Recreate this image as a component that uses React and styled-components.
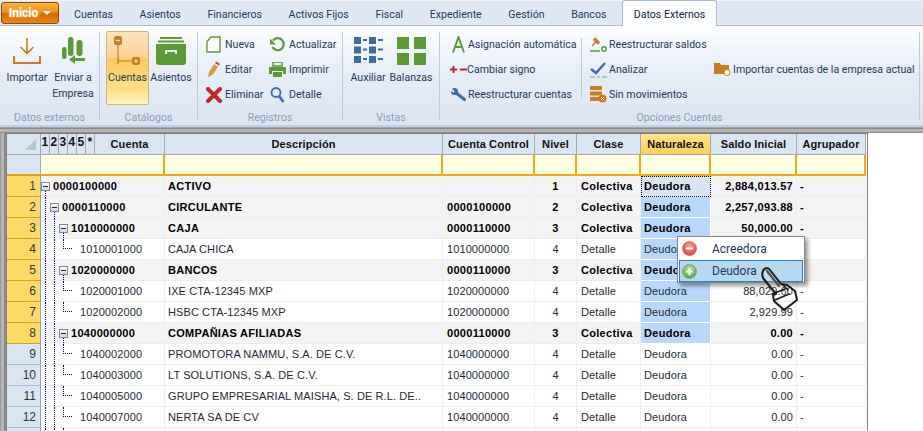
import React from 'react';
import styled, { createGlobalStyle, css } from 'styled-components';

const GlobalStyle = createGlobalStyle`
    html, body { margin: 0; padding: 0; background: #fff; }
    body { font-family: Roboto, "Noto Sans", sans-serif; width: 923px; height: 431px; overflow: hidden; }
`;

const Page = styled.div`
    width: 923px;
    height: 431px;
    overflow: hidden;
    position: relative;
`;

const TabBar = styled.div`
    display: flex;
    align-items: flex-end;
    height: 26px;
    background: #dfe8f4;
    border-top: 1px solid #f2f5fa;
    box-sizing: border-box;
    border-bottom: 1px solid #a9bcd4;
`;

const StartButton = styled.div`
    display: flex;
    align-items: center;
    justify-content: center;
    gap: 5px;
    width: 58px;
    height: 22px;
    margin: 0 1.7px 1px 1px;
    box-sizing: border-box;
    border: 1px solid #8a4a10;
    border-radius: 3px;
    background: linear-gradient(#f9b53c 0%, #ee8f1c 45%, #dd6a04 55%, #e8890f 100%);
    color: #fff;
    font-size: 12px;
    font-weight: 700;
    text-shadow: 0 0 3px #ffd58a;
    &::after {
        content: '';
        border: 4px solid transparent;
        border-top: 4px solid #fff;
        border-bottom: 0;
    }
`;

const Tab = styled.div`
    height: 24px;
    line-height: 27px;
    padding: 0 13.3px;
    font-size: 10.6px;
    color: #1e395b;
    white-space: nowrap;
    ${props => props.active && css`
        background: linear-gradient(#fff, #fbfcfe);
        border: 1px solid #a9bcd4;
        border-bottom: 0;
        border-radius: 3px 3px 0 0;
        padding: 0 11px;
        margin: 0 0 -1px 2px;
        height: 25px;
        color: #10243f;
    `}
`;

const Ribbon = styled.div`
    display: flex;
    height: 99px;
    padding: 6px 3px 0 0;
    box-sizing: border-box;
    background: linear-gradient(#fdfeff 0%, #e7eef7 45%, #dbe5f2 100%);
`;

const Group = styled.div`
    width: ${props => props.width}px;
    flex: ${props => (props.width ? 'none' : 1)};
    height: 88px;
    box-sizing: border-box;
    border-right: 1px solid #bccadc;
    display: flex;
    flex-direction: column;
`;

const GroupBody = styled.div`
    height: 78px;
    flex: none;
    display: flex;
    padding-left: ${props => props.pad || 0}px;
    gap: ${props => props.gap || 0}px;
`;

const GroupLabel = styled.div`
    height: 10px;
    text-align: center;
    font-size: 10.6px;
    line-height: 15px;
    color: #8e9db2;
    white-space: nowrap;
`;

const BigButton = styled.div`
    width: ${props => props.width}px;
    height: 74px;
    margin-top: -1px;
    flex: none;
    box-sizing: border-box;
    display: flex;
    flex-direction: column;
    align-items: center;
    padding-top: 1px;
    font-size: 10.6px;
    line-height: 16px;
    color: #1e395b;
    text-align: center;
    white-space: nowrap;
    border: 1px solid transparent;
    ${props => props.active && css`
        border-color: #d6b46a;
        border-radius: 2px;
        background: linear-gradient(#fee3bd 0%, #fdd29a 34%, #fdc860 38%, #fde08a 80%, #fff6c4 100%);
    `}
`;

const BigIcon = styled.div`
    height: 35px;
    margin-bottom: 2px;
    display: flex;
    align-items: center;
    justify-content: center;
`;

const SmallColumn = styled.div`
    display: flex;
    flex-direction: column;
    width: ${props => props.width}px;
    flex: none;
    padding-left: ${props => props.left || 0}px;
    box-sizing: border-box;
    ${props => props.divided && css`
        position: relative;
        &::after {
            content: '';
            position: absolute;
            right: 0;
            top: 6px;
            height: 60px;
            border-right: 1px solid #bccadc;
        }
    `}
`;

const SmallButton = styled.div`
    height: 25px;
    flex: none;
    display: flex;
    align-items: center;
    gap: ${props => props.gap ?? 3}px;
    font-size: 10.6px;
    color: #1e395b;
    white-space: nowrap;
`;

const SmallIcon = styled.span`
    width: 17px;
    height: 17px;
    flex: none;
    display: flex;
    align-items: center;
    justify-content: center;
`;

const GridArea = styled.div`
    height: 306px;
    box-sizing: border-box;
    padding: 6px 0 0 6px;
    position: relative;
    border-top: 2px solid #c4cfdf;
    background: #fff;
    &::before {
        content: '';
        position: absolute;
        left: 0; right: 0; top: 0;
        height: 6px;
        background: linear-gradient(#9aa6b8 0 1px, #8b8b8b 1px 2px, #b4b4b4 2px 5px, #8b8b8b 5px);
    }
    &::after {
        content: '';
        position: absolute;
        left: 0; top: 6px; bottom: 0;
        width: 6px;
        background: linear-gradient(90deg, #9a9a9a 0 1px, #b4b4b4 1px 4px, #8b8b8b 4px);
    }
`;

const Grid = styled.div`
    width: 862px;
    border-left: 1px solid #808080;
    border-right: 1px solid #808080;
    border-top: 1px solid #808080;
    box-sizing: border-box;
    font-family: "Liberation Sans", Arial, sans-serif;
    font-size: 11px;
    height: 300px;
    overflow: hidden;
`;

const columns = '34px 124px 278px 92px 42px 64px 70px 86px 69px';

const Row = styled.div`
    display: grid;
    grid-template-columns: ${columns};
    height: ${props => props.height || 21}px;
`;

const HeaderCell = styled.div`
    display: flex;
    align-items: center;
    justify-content: center;
    box-sizing: border-box;
    border-right: 1px solid #a5a9af;
    border-bottom: 1px solid #a5a9af;
    background: ${props => (props.hot ? 'linear-gradient(#ffe48a, #ffd055)' : '#d9e5f3')};
    font-weight: 700;
    letter-spacing: .1px;
    color: #111;
    white-space: nowrap;
`;

const Corner = styled(HeaderCell)`
    justify-content: flex-end;
    align-items: flex-end;
    padding: 0 4px 4px 0;
    &::after {
        content: '';
        border-left: 11px solid transparent;
        border-bottom: 11px solid #b3c3d8;
    }
`;

const LevelButtons = styled(HeaderCell)`
    justify-content: flex-start;
`;

const LevelButton = styled.span`
    width: 9px;
    height: 100%;
    flex: none;
    display: flex;
    align-items: flex-start;
    justify-content: center;
    padding-top: 1px;
    box-sizing: border-box;
    font-size: 12px;
    border-right: 1px solid #a5a9af;
`;

const AccountTitle = styled.span`
    flex: 1;
    text-align: center;
`;

const FilterCell = styled.div`
    background: #ffffe1;
    box-sizing: border-box;
    border-right: 2px solid #f7a60f;
    border-bottom: 2px solid #f7a60f;
    ${props => props.first && css`
        background: #d9e5f3;
        border-right: 1px solid #a5a9af;
        border-bottom: 2px solid #d9a200;
    `}
`;

const RowHead = styled.div`
    display: flex;
    align-items: center;
    justify-content: flex-end;
    padding-right: 4px;
    box-sizing: border-box;
    font-size: 12px;
    color: #333;
    border-right: 1px solid #8ea4c0;
    border-bottom: 1px solid ${props => (props.selected ? '#d4a017' : '#a9bdd6')};
    background: ${props => (props.selected ? '#ffd966' : '#d9e5f3')};
`;

const Cell = styled.div`
    display: flex;
    align-items: center;
    justify-content: ${props => (props.right ? 'flex-end' : props.center ? 'center' : 'flex-start')};
    padding: 0 3px 0 ${props => props.inset || 3}px;
    box-sizing: border-box;
    overflow: hidden;
    white-space: nowrap;
    color: ${props => (props.bold ? '#000' : '#232b36')};
    font-weight: ${props => (props.bold ? 700 : 400)};
    letter-spacing: ${props => (props.bold ? '.3px' : '.1px')};
    background: ${props => (props.bold ? '#f3f3f3' : '#fff')};
    border-right: 1px solid #eeeeee;
    border-bottom: 1px solid #ececec;
    ${props => props.picked && css`
        background: #b7d8fc;
        border-right: 1px solid #fff;
        border-bottom: 1px solid #fff;
    `}
    ${props => props.focused && css`
        background: #d9e4f1;
        outline: 1px dotted #000;
        outline-offset: -1px;
    `}
`;

const TreeCell = styled(Cell)`
    padding: 0 0 0 4px;
    overflow: visible;
    position: relative;
`;

const Guide = styled.span`
    width: 9px;
    height: 100%;
    flex: none;
    box-sizing: border-box;
    border-left: 1px dotted #00008b;
`;

const Elbow = styled.span`
    width: 9px;
    height: 50%;
    align-self: flex-start;
    flex: none;
    box-sizing: border-box;
    border-left: 1px dotted #00008b;
    border-bottom: 1px dotted #00008b;
    margin-right: 8px;
`;

const Expander = styled.span`
    position: relative;
    width: 9px;
    height: 9px;
    flex: none;
    box-sizing: border-box;
    margin: 0 3px 0 -4px;
    border: 1px solid #7f8a99;
    background: linear-gradient(#f7f9fc, #cfd8e4);
    &::before {
        content: '';
        position: absolute;
        left: 1px; right: 1px; top: 3px;
        height: 1px;
        background: #1c2a3a;
    }
    ${props => props.hasStem && css`
        &::after {
            content: '';
            position: absolute;
            left: 3px;
            top: 8px;
            height: 7px;
            border-left: 1px dotted #00008b;
        }
    `}
`;

const Menu = styled.div`
    position: absolute;
    left: 677px;
    top: 236px;
    width: 128px;
    height: 47px;
    box-sizing: border-box;
    padding: 1px;
    border: 1px solid #868686;
    background: #fff;
    box-shadow: 3px 3px 4px rgba(0, 0, 0, .4);
    font-family: Roboto, "Liberation Sans", sans-serif;
    font-size: 12px;
    color: #1e395b;
`;

const MenuItem = styled.div`
    height: ${props => (props.active ? 22 : 21)}px;
    display: flex;
    align-items: center;
    box-sizing: border-box;
    padding-left: 3px;
    gap: 15px;
    ${props => props.active && css`
        border: 1px solid #2a7fd0;
        background: #b7d8f0;
        margin-top: 1px;
        padding-left: 2px;
    `}
`;

const Pointer = styled.div`
    position: absolute;
    left: 761px;
    top: 266px;
    width: 40px;
    height: 48px;
`;

const Data = {
    green: '#5b9a35',
    orange: '#c97d22',
    navy: '#3d6aa3',
};

const ImportIcon = () => (
    <svg width="30" height="28" viewBox="0 0 30 28" fill="none" stroke={Data.orange}>
        <path d="M15 1v15M8.500 10l6.500 6.500 6.500-6.500" strokeWidth="1.600" />
        <path d="M2 19v7h26v-7" strokeWidth="2" />
    </svg>
);

const SendIcon = () => (
    <svg width="25" height="28" viewBox="0 0 25 28" fill={Data.green}>
        <rect x="1" y="10" width="4.500" height="12" rx="2.200" />
        <rect x="7" y="0" width="5.500" height="19" rx="2.700" />
        <rect x="15.500" y="3" width="6" height="16" rx="3" />
        <path d="M8 22.500l6-4.500v3h10v3H14v3z" />
    </svg>
);

const TreeIcon = () => (
    <svg width="30" height="32" viewBox="0 0 30 32" fill="none">
        <path d="M5 10v19M5 26h17" stroke={Data.orange} strokeWidth="1.200" />
        <rect x="1" y="1" width="8" height="9" rx="2" fill={Data.orange} />
        <path d="M3 5.500h4" stroke="#fde1b8" strokeWidth="1.400" />
        <rect x="19" y="22" width="8" height="8" rx="2" fill={Data.orange} />
        <path d="M21 26h4M23 24v4" stroke="#fde1b8" strokeWidth="1.200" />
    </svg>
);

const DrawerIcon = () => (
    <svg width="32" height="28" viewBox="0 0 32 28" fill={Data.green}>
        <rect x="5" y="0" width="22" height="2" />
        <rect x="3" y="3.500" width="26" height="2" />
        <path d="M1 7h30v18a3 3 0 0 1-3 3H4a3 3 0 0 1-3-3z" />
        <path d="M11 17v-3h10v3" stroke="#e7eef7" strokeWidth="2" fill="none" />
    </svg>
);

const PageIcon = () => (
    <svg width="15" height="17" viewBox="0 0 15 17" fill="#fff" stroke={Data.green} strokeWidth="1.400">
        <path d="M5 1h9v15H1V5.500z" />
    </svg>
);

const RefreshIcon = () => (
    <svg width="17" height="17" viewBox="0 0 17 17" fill="none" stroke={Data.green} strokeWidth="2.200">
        <path d="M4 4.500a6 6 0 1 1-.6 6.500" />
        <path d="M1 2.500v6h6z" fill={Data.green} stroke="none" />
    </svg>
);

const PencilIcon = () => (
    <svg width="14" height="17" viewBox="0 0 14 17">
        <path d="M1 16l1-5 5-8 4 2.500-5 8z" fill="#d99a3d" />
        <path d="M8 2l1-1.500 4 2.500-1 1.500z" fill="#c0392b" />
    </svg>
);

const PrinterIcon = () => (
    <svg width="17" height="16" viewBox="0 0 17 16" fill={Data.green}>
        <path d="M4 0h9v4H4z" fill="none" stroke={Data.green} strokeWidth="1.500" />
        <path d="M1 5h15a1 1 0 0 1 1 1v6h-3V9H3v3H0V6a1 1 0 0 1 1-1z" />
        <rect x="4" y="10" width="9" height="5" />
    </svg>
);

const CrossIcon = () => (
    <svg width="16" height="16" viewBox="0 0 16 16" stroke="#c1272d" strokeWidth="4" strokeLinecap="round">
        <path d="M2 2l12 12M14 2L2 14" />
    </svg>
);

const SearchIcon = () => (
    <svg width="15" height="17" viewBox="0 0 15 17" fill="none" stroke={Data.navy}>
        <circle cx="6" cy="6.500" r="4.500" strokeWidth="1.800" />
        <path d="M9 10l4.500 6" strokeWidth="2.600" />
    </svg>
);

const AuxiliarIcon = () => (
    <svg width="29" height="27" viewBox="0 0 29 27" fill={Data.navy}>
        {[0, 9.500, 19].map(y => (
            <g key={y}>
                <rect x="0" y={y} width="7" height="7" />
                <rect x="9" y={y + 2} width="4" height="2" />
                <rect x="15" y={y} width="7" height="7" />
                <rect x="24" y={y + 2} width="5" height="2" />
            </g>
        ))}
    </svg>
);

const BalanzasIcon = () => (
    <svg width="29" height="28" viewBox="0 0 29 28" fill={Data.green}>
        <rect x="0" y="0" width="12" height="12" />
        <rect x="17" y="0" width="12" height="12" />
        <rect x="0" y="16" width="12" height="12" />
        <rect x="17" y="16" width="12" height="12" />
    </svg>
);

const LetterIcon = () => (
    <svg width="13" height="17" viewBox="0 0 13 17" fill="none" stroke={Data.green} strokeWidth="1.900">
        <path d="M1 16.500L6.500 1 12 16.500M3 11h7" />
    </svg>
);

const SignIcon = () => (
    <svg width="17" height="7" viewBox="0 0 17 7" fill="#c1272d">
        <rect x="0" y="2.500" width="7" height="2" />
        <rect x="2.500" y="0" width="2" height="7" />
        <rect x="10" y="2.500" width="7" height="2" />
    </svg>
);

const WrenchIcon = () => (
    <svg width="17" height="16" viewBox="0 0 17 16" fill="none" stroke={Data.navy}>
        <circle cx="4.500" cy="4.500" r="3.500" fill={Data.navy} stroke="none" />
        <path d="M5 5l9.500 7.500" strokeWidth="3" strokeLinecap="round" />
        <path d="M0 1.500l4 3.500" stroke="#e7eef7" strokeWidth="2.200" />
    </svg>
);

const GavelIcon = () => (
    <svg width="17" height="15" viewBox="0 0 17 15" fill="none">
        <path d="M2 9l5-5" stroke={Data.orange} strokeWidth="1.500" />
        <path d="M4 1.500l5 5" stroke={Data.orange} strokeWidth="3.400" />
        <path d="M0 14h10" stroke={Data.green} strokeWidth="1.500" />
        <circle cx="14" cy="12" r="2.300" stroke={Data.green} strokeWidth="1.500" />
    </svg>
);

const CheckIcon = () => (
    <svg width="17" height="16" viewBox="0 0 17 16" fill="none" stroke={Data.navy}>
        <path d="M1 7l5 4 9-10" strokeWidth="2.400" />
        <path d="M0 15h5M7 15h3M12 15h5" strokeWidth="1" stroke="#7d97b8" />
    </svg>
);

const NoMovesIcon = () => (
    <svg width="17" height="17" viewBox="0 0 17 17">
        <rect x="0" y="0" width="12" height="4" fill={Data.orange} />
        <rect x="0" y="5.500" width="12" height="4" fill={Data.orange} />
        <rect x="0" y="11" width="9" height="4" fill={Data.orange} />
        <circle cx="12.500" cy="12.500" r="4" fill="#e2711d" />
        <path d="M11 11l3 3M14 11l-3 3" stroke="#fff" />
    </svg>
);

const FolderIcon = () => (
    <svg width="17" height="15" viewBox="0 0 17 15">
        <path d="M0 1h6l1 2h8v9H0z" fill={Data.orange} />
        <circle cx="13" cy="10.500" r="3" fill="#fff" stroke={Data.orange} />
    </svg>
);

const RoundIcon = ({ from, to, plus }) => (
    <svg width="15" height="15" viewBox="0 0 15 15">
        <defs>
            <radialGradient id={plus ? 'gPlus' : 'gMinus'} cx="50%" cy="35%" r="65%">
                <stop offset="0%" stopColor={from} />
                <stop offset="100%" stopColor={to} />
            </radialGradient>
        </defs>
        <circle cx="7.500" cy="7.500" r="7" fill={`url(#${plus ? 'gPlus' : 'gMinus'})`} stroke={to} strokeWidth=".6" />
        <path d={plus ? 'M4 7.500h7M7.500 4v7' : 'M4 7.500h7'} stroke="#fff" strokeWidth="2" />
    </svg>
);

const HandCursor = () => (
    <svg width="40" height="48" viewBox="0 0 40 48" fill="none" stroke="#1a1a1a" strokeWidth="2" strokeLinejoin="round" strokeLinecap="round">
        <path d="M2 5C3 2 7 1 9 4l11 14 6 1 8 6 2 9-13 10-10-9-1-6 3-1-13-16C1 9 1 7 2 5z" fill="rgba(255,255,255,.12)" />
        <path d="M6 5l12 15" stroke="#555" strokeWidth="2.500" />
        <path d="M11 28l13-5M14 34l14-6M22 19l5 5" strokeWidth="1.600" />
    </svg>
);

// guides: lineas abiertas a la izquierda, node: con expansor
const rows = [
    { n: 1, guides: 0, node: true, stem: true, cuenta: '0000100000', desc: 'ACTIVO', control: '', nivel: 1, clase: 'Colectiva', saldo: '2,884,013.57', bold: true, sel: true, focused: true },
    { n: 2, guides: 1, node: true, stem: true, cuenta: '0000110000', desc: 'CIRCULANTE', control: '0000100000', nivel: 2, clase: 'Colectiva', saldo: '2,257,093.88', bold: true, sel: true },
    { n: 3, guides: 2, node: true, stem: true, cuenta: '1010000000', desc: 'CAJA', control: '0000110000', nivel: 3, clase: 'Colectiva', saldo: '50,000.00', bold: true, sel: true },
    { n: 4, guides: 2, cuenta: '1010001000', desc: 'CAJA CHICA', control: '1010000000', nivel: 4, clase: 'Detalle', saldo: '', sel: true },
    { n: 5, guides: 2, node: true, stem: true, cuenta: '1020000000', desc: 'BANCOS', control: '0000110000', nivel: 3, clase: 'Colectiva', saldo: '', bold: true, sel: true },
    { n: 6, guides: 2, cuenta: '1020001000', desc: 'IXE CTA-12345 MXP', control: '1020000000', nivel: 4, clase: 'Detalle', saldo: '88,029.60', sel: true },
    { n: 7, guides: 2, cuenta: '1020002000', desc: 'HSBC CTA-12345 MXP', control: '1020000000', nivel: 4, clase: 'Detalle', saldo: '2,929.99', sel: true },
    { n: 8, guides: 2, node: true, stem: true, cuenta: '1040000000', desc: 'COMPAÑIAS AFILIADAS', control: '0000110000', nivel: 3, clase: 'Colectiva', saldo: '0.00', bold: true, sel: true },
    { n: 9, guides: 2, cuenta: '1040002000', desc: 'PROMOTORA NAMMU, S.A. DE C.V.', control: '1040000000', nivel: 4, clase: 'Detalle', saldo: '0.00' },
    { n: 10, guides: 2, cuenta: '1040003000', desc: 'LT SOLUTIONS, S.A. DE C.V.', control: '1040000000', nivel: 4, clase: 'Detalle', saldo: '0.00' },
    { n: 11, guides: 2, cuenta: '1040005000', desc: 'GRUPO EMPRESARIAL MAISHA, S. DE R.L. DE..', control: '1040000000', nivel: 4, clase: 'Detalle', saldo: '0.00' },
    { n: 12, guides: 2, cuenta: '1040007000', desc: 'NERTA SA DE CV', control: '1040000000', nivel: 4, clase: 'Detalle', saldo: '0.00' },
    { n: 13, guides: 2, cuenta: '', desc: '', control: '', nivel: '', clase: '', saldo: '', blank: true },
];

const headers = ['Descripción', 'Cuenta Control', 'Nivel', 'Clase', 'Naturaleza', 'Saldo Inicial', 'Agrupador'];

function TreeLines({ row }) {
    const guides = [];
    for (let i = 0; i < row.guides; i++) {
        guides.push(<Guide key={i} />);
    }
    return (
        <TreeCell bold={row.bold}>
            {guides}
            {row.node && <Expander hasStem={row.stem} />}
            {!row.node && !row.blank && <Elbow />}
            {row.blank && <Guide />}
            {row.cuenta}
        </TreeCell>
    );
}

export default function App() {
    return (
        <Page>
            <GlobalStyle />
            <TabBar>
                <StartButton>Inicio</StartButton>
                <Tab>Cuentas</Tab>
                <Tab>Asientos</Tab>
                <Tab>Financieros</Tab>
                <Tab>Activos Fijos</Tab>
                <Tab>Fiscal</Tab>
                <Tab>Expediente</Tab>
                <Tab>Gestión</Tab>
                <Tab>Bancos</Tab>
                <Tab active>Datos Externos</Tab>
            </TabBar>
            <Ribbon>
                <Group width={100}>
                    <GroupBody pad={7} gap={4}>
                        <BigButton width={40}><BigIcon><ImportIcon /></BigIcon>Importar</BigButton>
                        <BigButton width={44}><BigIcon><SendIcon /></BigIcon>Enviar a<br />Empresa</BigButton>
                    </GroupBody>
                    <GroupLabel>Datos externos</GroupLabel>
                </Group>
                <Group width={98}>
                    <GroupBody pad={6} gap={1}>
                        <BigButton width={43} active><BigIcon><TreeIcon /></BigIcon>Cuentas</BigButton>
                        <BigButton width={42}><BigIcon><DrawerIcon /></BigIcon>Asientos</BigButton>
                    </GroupBody>
                    <GroupLabel>Catálogos</GroupLabel>
                </Group>
                <Group width={145}>
                    <GroupBody pad={7}>
                        <SmallColumn width={64}>
                            <SmallButton><SmallIcon><PageIcon /></SmallIcon>Nueva</SmallButton>
                            <SmallButton><SmallIcon><PencilIcon /></SmallIcon>Editar</SmallButton>
                            <SmallButton><SmallIcon><CrossIcon /></SmallIcon>Eliminar</SmallButton>
                        </SmallColumn>
                        <SmallColumn width={70}>
                            <SmallButton><SmallIcon><RefreshIcon /></SmallIcon>Actualizar</SmallButton>
                            <SmallButton><SmallIcon><PrinterIcon /></SmallIcon>Imprimir</SmallButton>
                            <SmallButton><SmallIcon><SearchIcon /></SmallIcon>Detalle</SmallButton>
                        </SmallColumn>
                    </GroupBody>
                    <GroupLabel>Registros</GroupLabel>
                </Group>
                <Group width={97}>
                    <GroupBody pad={7} gap={3}>
                        <BigButton width={36}><BigIcon><AuxiliarIcon /></BigIcon>Auxiliar</BigButton>
                        <BigButton width={44}><BigIcon><BalanzasIcon /></BigIcon>Balanzas</BigButton>
                    </GroupBody>
                    <GroupLabel>Vistas</GroupLabel>
                </Group>
                <Group>
                    <GroupBody pad={10}>
                        <SmallColumn width={132} divided>
                            <SmallButton gap={1}><SmallIcon><LetterIcon /></SmallIcon>Asignación automática</SmallButton>
                            <SmallButton gap={0}><SmallIcon><SignIcon /></SmallIcon>Cambiar signo</SmallButton>
                            <SmallButton gap={1}><SmallIcon><WrenchIcon /></SmallIcon>Reestructurar cuentas</SmallButton>
                        </SmallColumn>
                        <SmallColumn width={132} left={8}>
                            <SmallButton gap={2}><SmallIcon><GavelIcon /></SmallIcon>Reestructurar saldos</SmallButton>
                            <SmallButton gap={2}><SmallIcon><CheckIcon /></SmallIcon>Analizar</SmallButton>
                            <SmallButton gap={2}><SmallIcon><NoMovesIcon /></SmallIcon>Sin movimientos</SmallButton>
                        </SmallColumn>
                        <SmallColumn width={200}>
                            <SmallButton />
                            <SmallButton gap={2}><SmallIcon><FolderIcon /></SmallIcon>Importar cuentas de la empresa actual</SmallButton>
                        </SmallColumn>
                    </GroupBody>
                    <GroupLabel>Opciones Cuentas</GroupLabel>
                </Group>
            </Ribbon>
            <GridArea>
                <Grid>
                    <Row height={21}>
                        <Corner />
                        <LevelButtons>
                            {['1', '2', '3', '4', '5', '*'].map(l => <LevelButton key={l}>{l}</LevelButton>)}
                            <AccountTitle>Cuenta</AccountTitle>
                        </LevelButtons>
                        {headers.map(h => <HeaderCell key={h} hot={h === 'Naturaleza'}>{h}</HeaderCell>)}
                    </Row>
                    <Row height={21}>
                        <FilterCell first />
                        {[0, 1, 2, 3, 4, 5, 6, 7].map(i => <FilterCell key={i} />)}
                    </Row>
                    {rows.map(row => (
                        <Row key={row.n}>
                            <RowHead selected={row.sel}>{row.blank ? '' : row.n}</RowHead>
                            <TreeLines row={row} />
                            <Cell bold={row.bold}>{row.desc}</Cell>
                            <Cell bold={row.bold} inset={4}>{row.control}</Cell>
                            <Cell bold={row.bold} center>{row.nivel}</Cell>
                            <Cell bold={row.bold} inset={4}>{row.clase}</Cell>
                            <Cell bold={row.bold} picked={row.sel} focused={row.focused}>{row.blank ? '' : 'Deudora'}</Cell>
                            <Cell bold={row.bold} right>{row.saldo}</Cell>
                            <Cell bold={row.bold}>{row.blank ? '' : '-'}</Cell>
                        </Row>
                    ))}
                </Grid>
            </GridArea>
            <Menu>
                <MenuItem><RoundIcon from="#f5a5a0" to="#d9413a" />Acreedora</MenuItem>
                <MenuItem active><RoundIcon plus from="#bfe3a8" to="#5ba53e" />Deudora</MenuItem>
            </Menu>
            <Pointer><HandCursor /></Pointer>
        </Page>
    );
}
